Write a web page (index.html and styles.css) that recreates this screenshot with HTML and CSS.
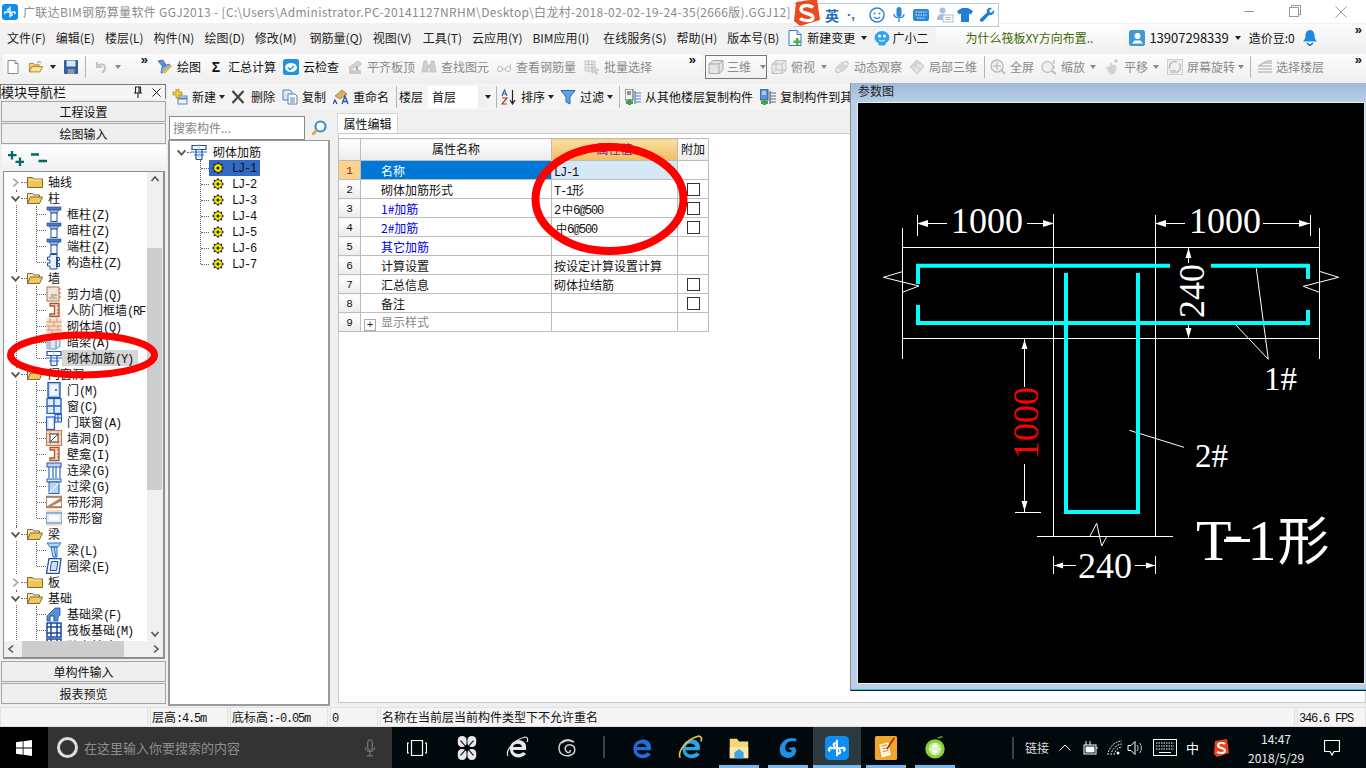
FILE: index.html
```html
<!DOCTYPE html>
<html lang="zh-CN">
<head>
<meta charset="utf-8">
<title>广联达BIM钢筋算量软件</title>
<link rel="stylesheet" href="styles.css">
</head>
<body>
<svg class="defs" aria-hidden="true">
  <symbol id="logo" viewBox="0 0 16 16"><rect width="16" height="16" rx="3" fill="#0b8df2"/><path d="M8 2.500v11M2.800 8.200h10.400M8 5.500c-2-2-3.300.8-1.200 1.900M8 11c2 1.800 3.200-.8 1.200-1.800M5 8.200C3 6.500 1.500 9.500 3.500 10M11 8.200c2-1.700 3 1.300 1.300 1.800" fill="none" stroke="#fff" stroke-width="1.300"/></symbol>
  <symbol id="new" viewBox="0 0 16 16"><path d="M3 1.500h7l3 3v10H3z" fill="#fff" stroke="#7d8c9c"/><path d="M10 1.500v3h3" fill="#dfe7ef" stroke="#7d8c9c"/></symbol>
  <symbol id="open" viewBox="0 0 18 16"><path d="M1.500 13.500V4h5l1 1.500h5V8" fill="#f3cf73" stroke="#a97e26"/><path d="M1.500 13.500L4.500 7.500H16.500L13.500 13.500z" fill="#fbe29a" stroke="#a97e26"/><path d="M10 3.500c1.500-2 3.500-2 5 0" fill="none" stroke="#4477b0"/></symbol>
  <symbol id="save" viewBox="0 0 16 16"><rect x="1" y="1" width="14" height="14" rx="1" fill="#2f5da8"/><rect x="3.500" y="1.500" width="9" height="6" fill="#d9e4f2"/><rect x="4.500" y="10" width="7" height="5" fill="#8c97a6"/></symbol>
  <symbol id="undo" viewBox="0 0 16 16"><path d="M4 3v5h5M4.500 7.500C7 4 12 5 12 9c0 2-1 3.500-3 4.500" fill="none" stroke="#c4c4c4" stroke-width="2"/></symbol>
  <symbol id="draw" viewBox="0 0 16 16"><path d="M1 2l5-1 3 5-3 2z" fill="#5d93d6" stroke="#2d5c9e" stroke-width=".7"/><path d="M5 8l7-3 2 2-6 6-4 1z" fill="#84aee0" stroke="#2d5c9e" stroke-width=".7"/><path d="M5 13l9-7 1 1.500-7 7z" fill="#e8b93c"/></symbol>
  <symbol id="cloud" viewBox="0 0 16 16"><rect width="16" height="16" rx="2.500" fill="#1d93e2"/><ellipse cx="8" cy="8.500" rx="6" ry="4.500" fill="#fff"/><path d="M5 8.500l2 2 4-3.500" fill="none" stroke="#1d93e2" stroke-width="1.300"/></symbol>
  <symbol id="align" viewBox="0 0 16 16"><path d="M2 8l9-6 3 2v2L3 11z" fill="#d3d3d3" stroke="#b5b5b5" stroke-width=".6"/><rect x="2" y="11" width="12" height="4" fill="#c9c9c9"/><rect x="9" y="7" width="2" height="4" fill="#aaa"/></symbol>
  <symbol id="bino" viewBox="0 0 16 16"><path d="M3 2h3v4h4V2h3l2 11H9V8H7v5H1z" fill="#cfcfcf" stroke="#b2b2b2" stroke-width=".6"/></symbol>
  <symbol id="glass" viewBox="0 0 16 16"><circle cx="4" cy="10" r="2.600" fill="none" stroke="#bdbdbd"/><circle cx="12" cy="10" r="2.600" fill="none" stroke="#bdbdbd"/><path d="M6.500 10h3M14.500 9V5" stroke="#bdbdbd" fill="none"/></symbol>
  <symbol id="batch" viewBox="0 0 16 16"><path d="M1 2h10v10H1zM1 5.500h10M1 9h10M4.500 2v10M8 2v10" fill="#efefef" stroke="#bcbcbc" stroke-width=".8"/><path d="M8 7l7 4-3 1 2 3-2 .5-2-3-2 2z" fill="#d6d6d6" stroke="#b5b5b5" stroke-width=".5"/></symbol>
  <symbol id="cube" viewBox="0 0 16 16"><path d="M1 5l4-3.500h10V11l-4 3.500H1zM1 5h10v9.500M11 5l4-3.500" fill="#e4e4e4" stroke="#a9a9a9"/></symbol>
  <symbol id="cube2" viewBox="0 0 16 16"><path d="M1 5l4-3.500h10V11l-4 3.500H1zM1 5h10v9.500M11 5l4-3.500M1 14.500L5 11h10M5 1.500V11" fill="#ececec" stroke="#b5b5b5" stroke-width=".8"/></symbol>
  <symbol id="orbit" viewBox="0 0 16 16"><ellipse cx="8" cy="8" rx="7.500" ry="3.200" transform="rotate(-40 8 8)" fill="none" stroke="#cbcbcb" stroke-width="1.500"/><circle cx="8" cy="8" r="4.200" fill="#d7d7d7"/></symbol>
  <symbol id="local" viewBox="0 0 16 16"><path d="M1 8l7-7 7 6-7 8z" fill="#e3e3e3" stroke="#c0c0c0"/><path d="M4.500 4.500l7 6.500M8 1l-3.500 11M1 8l11-5" stroke="#c4c4c4" fill="none" stroke-width=".8"/></symbol>
  <symbol id="full" viewBox="0 0 16 16"><circle cx="7" cy="7" r="6" fill="#f0f0f0" stroke="#b8b8b8" stroke-width="1.300"/><path d="M7 3v8M3 7h8" stroke="#b0b0b0"/><path d="M11 11l4 4" stroke="#bbb" stroke-width="2"/></symbol>
  <symbol id="zoomi" viewBox="0 0 16 16"><circle cx="6.500" cy="8" r="5.500" fill="#eee" stroke="#c5c5c5" stroke-width="1.400"/><path d="M11 12l4 3" stroke="#bbb" stroke-width="2"/><path d="M13 1v4M13 7v3" stroke="#c6c6c6" stroke-width="1.600"/></symbol>
  <symbol id="pan" viewBox="0 0 16 16"><path d="M2 9l3-2 1 1V4l2-.5.500 3 1.500-1 1.500 1 1 1-.5 5-3 3H6z" fill="#d2d2d2"/><path d="M12 0v4M10 2h4" stroke="#bdbdbd"/></symbol>
  <symbol id="rot" viewBox="0 0 16 16"><rect x=".5" y=".5" width="15" height="15" fill="#efefef" stroke="#cfcfcf"/><circle cx="8" cy="8" r="5.500" fill="none" stroke="#bababa" stroke-width="1.400" stroke-dasharray="12 3"/><path d="M3 11h6v3H3z" fill="#ccc"/></symbol>
  <symbol id="layers" viewBox="0 0 16 16"><path d="M1 7l6-3h8M1 7h14M1 10h14M1 13h14M4 5l6-3h5" fill="none" stroke="#bfbfbf" stroke-width="1.300"/></symbol>
  <symbol id="newc" viewBox="0 0 16 16"><rect x="6" y="7" width="9" height="8" fill="#eef3fb" stroke="#5b81b8"/><path d="M6 9.500h9" stroke="#5b81b8" stroke-width="2"/><path d="M4 0h3v3h3v3H7v3H4V6H1V3h3z" fill="#f4c93c" stroke="#a78420" stroke-width=".7"/></symbol>
  <symbol id="xx" viewBox="0 0 16 16"><path d="M2.500 2l11 12M13.500 2l-11 12" stroke="#444" stroke-width="2.200" fill="none"/></symbol>
  <symbol id="copy" viewBox="0 0 16 16"><path d="M1 1h7l2 2v8H1z" fill="#dbe6f5" stroke="#5b7fae"/><path d="M6 5h7l2 2v8H6z" fill="#fff" stroke="#5b7fae"/><path d="M8 9h5M8 11h5M8 13h5" stroke="#5b7fae"/></symbol>
  <symbol id="rename" viewBox="0 0 16 16"><path d="M2 7l7-6 5 4-7 5z" fill="#d7b35a" stroke="#8b7032" stroke-width=".7"/><path d="M0 15l2-4 2 4M9 15l3-8 3 8M10 12.500h4" fill="none" stroke="#2b56a5" stroke-width="1.400"/></symbol>
  <symbol id="sort" viewBox="0 0 16 16"><path d="M1 7l2.500-6L6 7M2 5h3" fill="none" stroke="#3460b0" stroke-width="1.200"/><path d="M1 9h5L1 15h5" fill="none" stroke="#a0402a" stroke-width="1.200"/><path d="M11.500 1v13M9 11l2.500 4 2.500-4" fill="none" stroke="#222" stroke-width="1.200"/></symbol>
  <symbol id="filter" viewBox="0 0 16 16"><path d="M1 1.500h14L10 8v7l-4-2V8z" fill="#5ea2e2" stroke="#2d6cb0"/></symbol>
  <symbol id="cfrom" viewBox="0 0 16 16"><rect x="0" y="0" width="8" height="11" fill="#f2f2f2" stroke="#555"/><path d="M2 3h4M2 5h4" stroke="#333"/><path d="M10 4h6M10 7h6M10 10h6M10 13h6M10 2v13" stroke="#4c7fc0" stroke-width="1.200"/><path d="M3 10h3v2h2v3H6v1H3v-1H1v-3h2z" fill="#3fa34d"/></symbol>
  <symbol id="cto" viewBox="0 0 16 16"><rect x="0" y="0" width="8" height="11" fill="#5c8fd8" stroke="#2c5aa0"/><path d="M2 3h4M2 5h4" stroke="#fff"/><path d="M10 4h6M10 7h6M10 10h6M10 13h6M10 2v13" stroke="#666" stroke-width="1.200"/><path d="M3 10h3v2h2v3H6v1H3v-1H1v-3h2z" fill="#3fa34d"/></symbol>
  <symbol id="change" viewBox="0 0 16 16"><path d="M2 .5h8l4 4v11H2z" fill="#fff" stroke="#2f7cc4"/><path d="M10 .5v4h4" fill="#cfe4f7" stroke="#2f7cc4"/><path d="M9 8h2.500v2.500H14V13h-2.500v2.500H9V13H6.500v-2.500H9z" fill="#4fae3f"/></symbol>
  <symbol id="bot" viewBox="0 0 16 16"><ellipse cx="8" cy="7.500" rx="7.500" ry="6.500" fill="#2fa4ea"/><circle cx="5.500" cy="6" r="1.600" fill="#fff"/><circle cx="10.500" cy="6" r="1.600" fill="#fff"/><path d="M5 10c2 1.500 4 1.500 6 0" fill="none" stroke="#fff"/><path d="M4 13l1 2.500h6l1-2.500" fill="#2fa4ea"/></symbol>
  <symbol id="user" viewBox="0 0 16 16"><rect width="16" height="16" rx="2.500" fill="#3c9ad6"/><circle cx="8.500" cy="6" r="3" fill="#fff"/><path d="M3 13.500l2.500-3h6l2.500 3z" fill="#fff"/></symbol>
  <symbol id="bell" viewBox="0 0 16 16"><path d="M8 0c-3 0-4.500 3-4.500 5.500 0 3-1 4.500-2.500 6h14c-1.500-1.500-2.500-3-2.500-6C12.500 3 11 0 8 0z" fill="#1a8be5"/><path d="M5 13l3 2.500 3-2.500" fill="none" stroke="#1a6fc0" stroke-width="1.500"/></symbol>
  <symbol id="find" viewBox="0 0 16 16"><circle cx="9.500" cy="6.500" r="5" fill="#fff" stroke="#2d8fdd" stroke-width="2.200"/><path d="M6 10l-4.500 4.500" stroke="#e0a63a" stroke-width="2.600"/></symbol>
  <symbol id="plus" viewBox="0 0 16 15"><path d="M4 0v8.500M0 4.200h8.500M12 6.500v8.500M7.500 10.800H16" stroke="#006a63" stroke-width="2.300" fill="none"/></symbol>
  <symbol id="minus" viewBox="0 0 16 15"><path d="M0 3.500h8M7.500 10H16" stroke="#006a63" stroke-width="2.300" fill="none"/></symbol>
  <symbol id="chd" viewBox="0 0 10 10"><path d="M1.500 3l3.500 4 3.500-4" fill="none" stroke="#555" stroke-width="1.600"/></symbol>
  <symbol id="chr" viewBox="0 0 10 10"><path d="M3 1.500l4 3.500-4 3.500" fill="none" stroke="#aaa" stroke-width="1.600"/></symbol>
  <symbol id="chu" viewBox="0 0 10 10"><path d="M1.500 7l3.500-4 3.500 4" fill="none" stroke="#555" stroke-width="1.600"/></symbol>
  <symbol id="chl" viewBox="0 0 10 10"><path d="M7 1.500L3 5l4 3.500" fill="none" stroke="#555" stroke-width="1.600"/></symbol>
  <symbol id="chr2" viewBox="0 0 10 10"><path d="M3 1.500l4 3.500-4 3.500" fill="none" stroke="#555" stroke-width="1.600"/></symbol>
  <symbol id="fc" viewBox="0 0 16 16"><path d="M.5 13.500V3.500h5l1.500 1.500h8.500v8.500z" fill="#f1c552" stroke="#7c6a3a"/><path d="M1.500 6h13" stroke="#fbe9ac"/></symbol>
  <symbol id="fo" viewBox="0 0 16 16"><path d="M.5 13.500V3.500h5l1.500 1.500h5.500V7" fill="#f6e7b8" stroke="#7c6a3a"/><path d="M.5 13.500L3.500 7h12l-3 6.500z" fill="#f4c95a" stroke="#7c6a3a"/></symbol>
  <symbol id="col" viewBox="0 0 16 16"><rect x="1" y="1" width="14" height="3" fill="#4a7cc4" stroke="#234f9a" stroke-width=".7"/><path d="M3 4h10l-2 3H5z" fill="#9dbde6" stroke="#234f9a" stroke-width=".7"/><rect x="5" y="7" width="6" height="8.500" fill="#fff" stroke="#1f4fa0"/></symbol>
  <symbol id="ccol" viewBox="0 0 16 16"><path d="M4 .5h7v3h2.500v3H11v3h2.500v3H11v2.500H4V12H1.500V9H4V6H1.500V3H4z" fill="#e9f0fb" stroke="#1f4fa0"/><path d="M11 3v10" stroke="#1f4fa0" stroke-width="2"/></symbol>
  <symbol id="swall" viewBox="0 0 16 16"><rect x="1" y="1" width="12" height="14" fill="#f4e5d9" stroke="#b3714a"/><path d="M14 2v2M14 6v2M14 10v2M3 12h8M5 9h6" stroke="#b3714a"/><path d="M3 13l3-4 5 3z" fill="#bbb"/></symbol>
  <symbol id="fwall" viewBox="0 0 16 16"><path d="M4 1.500h9v13H4v-2.500h4.500v-8H4z" fill="#f4dcc8" stroke="#a6552a" stroke-width="1.300"/><path d="M11 4h2M11 8h2M11 11h2" stroke="#a6552a"/></symbol>
  <symbol id="brick" viewBox="0 0 16 16"><rect x=".5" y=".5" width="15" height="15" fill="#f7dccb"/><path d="M0 4h16M0 8h16M0 12h16M4 0v4M11 0v4M8 4v4M3 8v4M12 8v4M6 12v4" stroke="#d8905e" stroke-width=".9"/></symbol>
  <symbol id="hbeam" viewBox="0 0 16 16"><path d="M1 4l4-3h9v11l-4 3H1z" fill="#dce8f5" stroke="#7090b8"/><path d="M1 4h9v11M10 4l4-3" fill="none" stroke="#7090b8"/><rect x="1" y="4" width="4" height="11" fill="#a9c2e0"/></symbol>
  <symbol id="rein" viewBox="0 0 16 16"><path d="M1 1.500h14v4H1zM5 5.500v10M11 5.500v10M5 15.500h6" fill="none" stroke="#1f4fa8" stroke-width="1.200"/><path d="M0 8h16M3 11h10" stroke="#2b6bd0" stroke-width="1.200"/><path d="M8 0v14" stroke="#9cb6e0"/></symbol>
  <symbol id="door" viewBox="0 0 16 16"><rect x="2" y=".5" width="12" height="15" fill="#bcd5f5" stroke="#1f4fa8" stroke-width="1.300"/><rect x="4" y="2.500" width="8" height="11" fill="#eef5fd"/><circle cx="10" cy="8" r="1" fill="#1f4fa8"/></symbol>
  <symbol id="win" viewBox="0 0 16 16"><rect x="1" y=".5" width="14" height="15" fill="#dfeafa" stroke="#1f5fb8" stroke-width="1.300"/><path d="M8 0v16M1 8h14" stroke="#1f5fb8" stroke-width="1.300"/></symbol>
  <symbol id="dw" viewBox="0 0 16 16"><rect x=".5" y="3" width="8" height="12.500" fill="#dfeafa" stroke="#1f5fb8" stroke-width="1.200"/><rect x="3" y="5" width="3.500" height="9" fill="#fff"/><path d="M9 .5h6.500V8H9zM12 .5V8M9 4h6.500" fill="#dfeafa" stroke="#1f5fb8" stroke-width="1.100"/></symbol>
  <symbol id="hole" viewBox="0 0 16 16"><rect x=".5" y=".5" width="15" height="15" fill="#f7dccb" stroke="#c07a4a"/><path d="M0 4h16M0 12h16M4 0v16M12 0v16" stroke="#d8905e" stroke-width=".8"/><rect x="4" y="4" width="8" height="8" fill="#fff" stroke="#444"/><path d="M4 12l8-8" stroke="#444"/></symbol>
  <symbol id="lintel" viewBox="0 0 16 16"><path d="M1 1h14v4H1zM3 5v11M7 5v11M10 5v11M14 5v11" fill="#bcd2f0" stroke="#1f5fb8" stroke-width="1.100"/></symbol>
  <symbol id="gl" viewBox="0 0 16 16"><rect x="1" y="1" width="14" height="3" fill="#dfeafa" stroke="#1f5fb8"/><rect x="3" y="4" width="10" height="11.500" fill="#bcd5f5" stroke="#1f5fb8"/><path d="M3 15l10-10" stroke="#fff"/></symbol>
  <symbol id="bh" viewBox="0 0 16 16"><rect y="1" width="16" height="14" fill="#f7dccb"/><rect y="3" width="16" height="10" fill="#fff" stroke="#7a4a20" stroke-width="1.200"/><path d="M0 13L16 3v4L4 13z" fill="#b98050"/></symbol>
  <symbol id="bw" viewBox="0 0 16 16"><rect y="0" width="16" height="16" fill="#f7dccb"/><rect y="3" width="16" height="10" fill="#dfeafa" stroke="#5f8fd0" stroke-width="1.200"/><rect x="3" y="5.500" width="10" height="5" fill="#fff"/></symbol>
  <symbol id="beam" viewBox="0 0 16 16"><path d="M1 1h14l-3 4H4zM5 5h6v10H7z" fill="#bcd5f5" stroke="#2b77c8"/><path d="M8 5l2 10" stroke="#2b77c8"/></symbol>
  <symbol id="rbeam" viewBox="0 0 16 16"><path d="M3 .5h12L13 15.500H.5z" fill="#fff" stroke="#1f4fa8" stroke-width="1.300"/><path d="M5.500 3.500h6.500L10.500 12.500H4z" fill="#cfe0f6" stroke="#1f4fa8"/></symbol>
  <symbol id="fbeam" viewBox="0 0 16 16"><path d="M1 15V10L9 2h5v7l-2 2v4z" fill="#5b8fd0" stroke="#1f4fa8" stroke-width=".8"/><path d="M4 15v-5h4v5" fill="#fff" stroke="#1f4fa8"/></symbol>
  <symbol id="raft" viewBox="0 0 16 16"><rect x="1" y="1" width="14" height="14" fill="#fff" stroke="#17479c" stroke-width="1.500"/><path d="M1 5h14M1 11h14M5 1v14M11 1v14" stroke="#17479c" stroke-width="1.500"/></symbol>
  <symbol id="gear" viewBox="0 0 12 12"><circle cx="6" cy="6" r="4.300" fill="#f4e700" stroke="#222" stroke-width=".9"/><circle cx="6" cy="6" r="1.600" fill="#222"/><path d="M6 0v2M6 10v2M0 6h2M10 6h2M1.800 1.800l1.400 1.400M8.800 8.800l1.400 1.400M1.800 10.200l1.400-1.400M8.800 3.200l1.400-1.400" stroke="#222" stroke-width="1.100"/></symbol>
  <symbol id="wstart" viewBox="0 0 16 16"><path d="M0 2.300L6.700 1.300V7.500H0zM7.500 1.200L16 0V7.500H7.500zM0 8.500H6.700V14.700L0 13.700zM7.500 8.500H16V16L7.500 14.800z" fill="#fff"/></symbol>
  <symbol id="mic" viewBox="0 0 16 24"><rect x="5" y="1" width="6" height="14" rx="3" fill="none" stroke="#888" stroke-width="1.300"/><path d="M2 11c0 8 12 8 12 0M8 18v4M4 22.500h8" fill="none" stroke="#888" stroke-width="1.300"/></symbol>
  <symbol id="tview" viewBox="0 0 20 16"><rect x="4.500" y=".5" width="11" height="15" fill="none" stroke="#fff" stroke-width="1.200"/><path d="M2 3H.5v10H2M18 3h1.500v10H18" fill="none" stroke="#fff" stroke-width="1.200"/></symbol>
  <symbol id="fan" viewBox="0 0 22 26"><rect x="1" y="0" width="9.500" height="12" rx="4.500" fill="#e8e8e8"/><rect x="11.500" y="0" width="9.500" height="12" rx="4.500" fill="#e8e8e8"/><rect x="1" y="14" width="9.500" height="12" rx="4.500" fill="#e8e8e8"/><rect x="11.500" y="14" width="9.500" height="12" rx="4.500" fill="#e8e8e8"/><path d="M4 5l7 8 7-8M4 21l7-8 7 8" fill="none" stroke="#02090d" stroke-width="1.200"/></symbol>
  <symbol id="ie" viewBox="0 0 24 24"><path d="M21 14H8c.5 4 7 5.500 10 2l3 2c-5 6-16 4-16-5C5 5 14 2 19 6c2 2 2.500 4 2 8zM8 11h9c-.5-4-8-4.500-9 0z" fill="#1e6fdc"/></symbol>
  <symbol id="iew" viewBox="0 0 24 24"><path d="M21 14H8c.5 4 7 5.500 10 2l3 2c-5 6-16 4-16-5C5 5 14 2 19 6c2 2 2.500 4 2 8zM8 11h9c-.5-4-8-4.500-9 0z" fill="#e8e8e8"/><path d="M3 20C0 15 9 4 20 1c3 0 3 3 2 5" fill="none" stroke="#e8e8e8" stroke-width="1.200"/></symbol>
  <symbol id="iec" viewBox="0 0 24 24"><path d="M21 14H8c.5 4 7 5.500 10 2l3 2c-5 6-16 4-16-5C5 5 14 2 19 6c2 2 2.500 4 2 8zM8 11h9c-.5-4-8-4.500-9 0z" fill="#29a6e8"/><path d="M3 21C0 15 9 4 20 1c3 0 3 3 2 5" fill="none" stroke="#e8c23a" stroke-width="1.500"/></symbol>
  <symbol id="spiral" viewBox="0 0 22 22"><path d="M18 5C12 0 3 4 3 11s7 9 12 7 5-9 0-10-7 3-5 6 5 1 4-1M6 6c3-3 8-3 12-1" fill="none" stroke="#d0d0d0" stroke-width="1.500"/></symbol>
  <symbol id="gblue" viewBox="0 0 22 26"><path d="M20 3C12 0 2 5 2 15c0 8 8 10 13 8s6-8 3-11l-7 1 4 3c-1 3-7 2-7-3 0-6 6-9 12-7z" fill="#1d8fe6"/></symbol>
  <symbol id="explorer" viewBox="0 0 22 26"><path d="M1 3h8l2 3h10v18H1z" fill="#f4d777"/><path d="M1 12h20v12H1z" fill="#f9e8a8"/><path d="M6 18l5-4 5 4v6H6z" fill="#3aa6e6"/></symbol>
  <symbol id="note" viewBox="0 0 24 26"><rect width="24" height="26" rx="2" fill="#f4a62a"/><path d="M4 9l11-3 3 15-11 3z" fill="#fff4d4" stroke="#c77a10" stroke-width=".6"/><path d="M7 11l6-1.500M8 14l6-1.500M8.500 17l6-1.500" stroke="#b58030"/><path d="M21 2L13 14" stroke="#a04010" stroke-width="2"/></symbol>
  <symbol id="ball" viewBox="0 0 22 26"><circle cx="11" cy="14" r="10.500" fill="#8ccf3c"/><circle cx="11" cy="14" r="7" fill="#c9ec94"/><path d="M5 14h12M11 8l-3 4h6zM11 20l-3-4h6z" fill="#fff" stroke="#fff"/><path d="M14 2l5-1" stroke="#4a9a20" stroke-width="2"/></symbol>
  <symbol id="bat" viewBox="0 0 18 14"><rect x="3" y="4" width="12" height="9" fill="none" stroke="#fff"/><rect x="4.500" y="5.500" width="9" height="6" fill="#fff"/><path d="M5 0v4M9 0v4M15 7h2" stroke="#fff"/></symbol>
  <symbol id="wifi" viewBox="0 0 16 16"><path d="M1 15C1 8 8 1 15 1M4 15c0-5 6-11 11-11M7 15c0-3 4-8 8-8" fill="none" stroke="#ddd" stroke-dasharray="2 1"/><circle cx="11" cy="13" r="1.500" fill="#fff"/></symbol>
  <symbol id="vol" viewBox="0 0 16 16"><path d="M1 5.500h3l4-4v13l-4-4H1z" fill="none" stroke="#fff"/><path d="M10 5c1.500 2 1.500 4 0 6M12.500 3c2.500 3 2.500 7 0 10" fill="none" stroke="#ccc"/></symbol>
  <symbol id="kbd" viewBox="0 0 24 17"><rect x=".5" y=".5" width="23" height="16" fill="none" stroke="#fff"/><path d="M3 4h18M3 7h18M3 10h18" stroke="#fff" stroke-dasharray="1.500 1"/><path d="M6 13.500h12" stroke="#fff"/></symbol>
  <symbol id="sred" viewBox="0 0 16 18"><path d="M2 2l12-2 2 14-12 4-3-3z" fill="#e8431a"/><path d="M12 5C10 3.500 5 3.500 5 6.500s7 2 7 5-5 3-8 1.500" fill="none" stroke="#fff" stroke-width="2"/></symbol>
  <symbol id="action" viewBox="0 0 16 16"><path d="M.5.500h15v11H10L8 15l-2-3.500H.5z" fill="none" stroke="#fff" stroke-width="1.200"/></symbol>
  <symbol id="smile" viewBox="0 0 16 16"><circle cx="8" cy="8" r="7" fill="none" stroke="#2a86d8" stroke-width="1.500"/><circle cx="5.500" cy="6.500" r="1" fill="#2a86d8"/><circle cx="10.500" cy="6.500" r="1" fill="#2a86d8"/><path d="M5 10c2 2 4 2 6 0" fill="none" stroke="#2a86d8" stroke-width="1.200"/></symbol>
  <symbol id="imic" viewBox="0 0 12 16"><rect x="3.500" y="0" width="5" height="10" rx="2.500" fill="#2a86d8"/><path d="M1 7c0 5 10 5 10 0M6 12v3" fill="none" stroke="#2a86d8" stroke-width="1.300"/></symbol>
  <symbol id="ikbd" viewBox="0 0 16 12"><rect width="16" height="12" rx="2" fill="#2a86d8"/><path d="M2.500 3h11M2.500 6h11M4 9h8" stroke="#fff" stroke-dasharray="1.500 1"/></symbol>
  <symbol id="iperson" viewBox="0 0 16 16"><circle cx="5.500" cy="3.500" r="3" fill="#a8bfd8"/><path d="M0 13c0-4 2-6 5.500-6S8 8 8 8v5z" fill="#a8bfd8"/><rect x="6" y="8" width="10" height="7" fill="#fff" stroke="#a8bfd8"/><path d="M8 10.500h6M8 12.500h6" stroke="#a8bfd8"/></symbol>
  <symbol id="ishirt" viewBox="0 0 16 16"><path d="M5 1h6l5 3-2 3.500-2-1V15H4V6.500l-2 1L0 4z" fill="#1f7fd4"/></symbol>
  <symbol id="iwrench" viewBox="0 0 16 16"><path d="M15 3l-3 3-2-2 3-3c-3-1-6 1-5 4.500L1 12c-1 2 1 3.500 3 2.500L10 8c3 1 6-2 5-5z" fill="#1f7fd4"/></symbol>
  <symbol id="sbig" viewBox="0 0 27 27"><path d="M3 3l21-3 3 21-20 6-6-5z" fill="#ea4a1c"/><path d="M20 8.500C17 5.500 8 5.500 8 10.500s12 3 12 8c0 4-9 4-13 1" fill="none" stroke="#fff" stroke-width="3.400"/></symbol>
</svg>

<header class="titlebar">
  <svg class="ic logo"><use href="#logo"/></svg>
  <span class="titletext">广联达BIM钢筋算量软件 GGJ2013 - [C:\Users\Administrator.PC-20141127NRHM\Desktop\白龙村-2018-02-02-19-24-35(2666版).GGJ12]</span>
  <div class="winctl">
    <span class="min"></span><span class="max"></span>
    <svg class="cl" viewBox="0 0 12 12"><path d="M.5.500l11 11M11.500.500l-11 11" stroke="#999" fill="none"/></svg>
  </div>
</header>

<nav class="menubar">
  <div class="menus">
    <span>文件(F)</span><span>编辑(E)</span><span>楼层(L)</span><span>构件(N)</span><span>绘图(D)</span><span>修改(M)</span><span class="ml3">钢筋量(Q)</span><span>视图(V)</span><span class="ml1">工具(T)</span><span>云应用(Y)</span><span>BIM应用(I)</span><span class="ml4">在线服务(S)</span><span>帮助(H)</span><span>版本号(B)</span>
  </div>
  <div class="item ml8 g4"><svg class="ic"><use href="#change"/></svg><span>新建变更</span></div><i class="arrow dark ml6"></i>
  <div class="item ml7 g2"><svg class="ic"><use href="#bot"/></svg><span>广小二</span></div>
  <div class="news"><span>为什么筏板XY方向布置..</span></div>
  <div class="acct">
    <svg class="ic"><use href="#user"/></svg><span class="phone">13907298339</span><i class="arrow dark ml6"></i><span class="ml8">造价豆:0</span><svg class="ic ml7"><use href="#bell"/></svg><b class="more">»</b>
  </div>
</nav>

<div class="toolbar">
  <div class="tgroup ga">
    <svg class="ic ml2"><use href="#new"/></svg>
    <svg class="ic ml7"><use href="#open"/></svg><i class="arrow dark ml6"></i>
    <svg class="ic ml7"><use href="#save"/></svg>
    <i class="sep ml6"></i>
    <svg class="ic ml7"><use href="#undo"/></svg><i class="arrow ml6"></i>
    <b class="more m7">»</b>
  </div>
  <div class="tgroup gb">
    <div class="item"><svg class="ic"><use href="#draw"/></svg><span>绘图</span></div>
    <div class="item ml7"><span class="sigma">Σ</span><span>汇总计算</span></div>
    <div class="item ml7"><svg class="ic"><use href="#cloud"/></svg><span>云检查</span></div>
    <div class="item off ml8"><svg class="ic"><use href="#align"/></svg><span>平齐板顶</span></div>
    <div class="item off ml6"><svg class="ic"><use href="#bino"/></svg><span>查找图元</span></div>
    <div class="item off ml7"><svg class="ic"><use href="#glass"/></svg><span>查看钢筋量</span></div>
    <div class="item off ml8"><svg class="ic"><use href="#batch"/></svg><span>批量选择</span></div>
    <b class="more m7">»</b>
  </div>
  <div class="tgroup gc off">
    <div class="view3d"><svg class="ic"><use href="#cube"/></svg><span>三维</span><i class="arrow"></i></div>
    <div class="item ml4"><svg class="ic"><use href="#cube2"/></svg><span>俯视</span></div><i class="arrow ml6"></i>
    <div class="item ml7"><svg class="ic"><use href="#orbit"/></svg><span>动态观察</span></div>
    <div class="item ml7"><svg class="ic"><use href="#local"/></svg><span>局部三维</span></div>
    <i class="sep ml7"></i>
    <div class="item ml5"><svg class="ic"><use href="#full"/></svg><span>全屏</span></div>
    <div class="item ml7"><svg class="ic"><use href="#zoomi"/></svg><span>缩放</span></div><i class="arrow ml5"></i>
    <div class="item ml8"><svg class="ic"><use href="#pan"/></svg><span>平移</span></div><i class="arrow ml5"></i>
    <div class="item ml8"><svg class="ic"><use href="#rot"/></svg><span>屏幕旋转</span></div><i class="arrow ml3"></i>
    <i class="sep ml6"></i>
    <div class="item ml6 g3"><svg class="ic"><use href="#layers"/></svg><span>选择楼层</span></div>
    <b class="more">»</b>
  </div>
</div>

<main class="main">
  <aside class="nav">
    <div class="navhead"><span>模块导航栏</span>
      <svg class="pin" viewBox="0 0 10 12"><path d="M2.500 1h5v6h-5zM1 7h8M5 7v5M6 1v6" fill="none" stroke="#222" stroke-width="1.100"/></svg>
      <svg class="navx" viewBox="0 0 9 9"><path d="M.5.500l8 8M8.500.500l-8 8" stroke="#222" fill="none"/></svg>
    </div>
    <div class="navbtn">工程设置</div>
    <div class="navbtn">绘图输入</div>
    <div class="expand"><svg class="pm"><use href="#plus"/></svg><svg class="pm"><use href="#minus"/></svg></div>
    <div class="treebox">
      <div class="treeview">
        <div class="tree">
          <div class="group"><div class="row"><svg class="chev"><use href="#chr"/></svg><i class="lead0"></i><svg class="ic"><use href="#fc"/></svg><span class="lbl">轴线</span></div></div>
          <div class="group open"><div class="row"><svg class="chev"><use href="#chd"/></svg><i class="lead0"></i><svg class="ic"><use href="#fo"/></svg><span class="lbl">柱</span></div>
            <div class="kids">
              <div class="row"><i class="lead"></i><svg class="ic"><use href="#col"/></svg><span class="lbl">框柱<span class="a">(Z)</span></span></div>
              <div class="row"><i class="lead"></i><svg class="ic"><use href="#col"/></svg><span class="lbl">暗柱<span class="a">(Z)</span></span></div>
              <div class="row"><i class="lead"></i><svg class="ic"><use href="#col"/></svg><span class="lbl">端柱<span class="a">(Z)</span></span></div>
              <div class="row"><i class="lead"></i><svg class="ic"><use href="#ccol"/></svg><span class="lbl">构造柱<span class="a">(Z)</span></span></div>
            </div>
          </div>
          <div class="group open"><div class="row"><svg class="chev"><use href="#chd"/></svg><i class="lead0"></i><svg class="ic"><use href="#fo"/></svg><span class="lbl">墙</span></div>
            <div class="kids">
              <div class="row"><i class="lead"></i><svg class="ic"><use href="#swall"/></svg><span class="lbl">剪力墙<span class="a">(Q)</span></span></div>
              <div class="row"><i class="lead"></i><svg class="ic"><use href="#fwall"/></svg><span class="lbl">人防门框墙<span class="a">(RF</span></span></div>
              <div class="row"><i class="lead"></i><svg class="ic"><use href="#brick"/></svg><span class="lbl">砌体墙<span class="a">(Q)</span></span></div>
              <div class="row"><i class="lead"></i><svg class="ic"><use href="#hbeam"/></svg><span class="lbl">暗梁<span class="a">(A)</span></span></div>
              <div class="row"><i class="lead"></i><svg class="ic"><use href="#rein"/></svg><span class="lbl hot">砌体加筋<span class="a">(Y)</span></span></div>
            </div>
          </div>
          <div class="group open"><div class="row"><svg class="chev"><use href="#chd"/></svg><i class="lead0"></i><svg class="ic"><use href="#fo"/></svg><span class="lbl">门窗洞</span></div>
            <div class="kids">
              <div class="row"><i class="lead"></i><svg class="ic"><use href="#door"/></svg><span class="lbl">门<span class="a">(M)</span></span></div>
              <div class="row"><i class="lead"></i><svg class="ic"><use href="#win"/></svg><span class="lbl">窗<span class="a">(C)</span></span></div>
              <div class="row"><i class="lead"></i><svg class="ic"><use href="#dw"/></svg><span class="lbl">门联窗<span class="a">(A)</span></span></div>
              <div class="row"><i class="lead"></i><svg class="ic"><use href="#hole"/></svg><span class="lbl">墙洞<span class="a">(D)</span></span></div>
              <div class="row"><i class="lead"></i><svg class="ic"><use href="#fwall"/></svg><span class="lbl">壁龛<span class="a">(I)</span></span></div>
              <div class="row"><i class="lead"></i><svg class="ic"><use href="#lintel"/></svg><span class="lbl">连梁<span class="a">(G)</span></span></div>
              <div class="row"><i class="lead"></i><svg class="ic"><use href="#gl"/></svg><span class="lbl">过梁<span class="a">(G)</span></span></div>
              <div class="row"><i class="lead"></i><svg class="ic"><use href="#bh"/></svg><span class="lbl">带形洞</span></div>
              <div class="row"><i class="lead"></i><svg class="ic"><use href="#bw"/></svg><span class="lbl">带形窗</span></div>
            </div>
          </div>
          <div class="group open"><div class="row"><svg class="chev"><use href="#chd"/></svg><i class="lead0"></i><svg class="ic"><use href="#fo"/></svg><span class="lbl">梁</span></div>
            <div class="kids">
              <div class="row"><i class="lead"></i><svg class="ic"><use href="#beam"/></svg><span class="lbl">梁<span class="a">(L)</span></span></div>
              <div class="row"><i class="lead"></i><svg class="ic"><use href="#rbeam"/></svg><span class="lbl">圈梁<span class="a">(E)</span></span></div>
            </div>
          </div>
          <div class="group"><div class="row"><svg class="chev"><use href="#chr"/></svg><i class="lead0"></i><svg class="ic"><use href="#fc"/></svg><span class="lbl">板</span></div></div>
          <div class="group open"><div class="row"><svg class="chev"><use href="#chd"/></svg><i class="lead0"></i><svg class="ic"><use href="#fo"/></svg><span class="lbl">基础</span></div>
            <div class="kids">
              <div class="row"><i class="lead"></i><svg class="ic"><use href="#fbeam"/></svg><span class="lbl">基础梁<span class="a">(F)</span></span></div>
              <div class="row"><i class="lead"></i><svg class="ic"><use href="#raft"/></svg><span class="lbl">筏板基础<span class="a">(M)</span></span></div>
              <div class="row"><i class="lead"></i><svg class="ic"><use href="#raft"/></svg><span class="lbl">独立基础<span class="a">(D)</span></span></div>
            </div>
          </div>
        </div>
        <div class="vscroll">
          <svg class="sbtn"><use href="#chu"/></svg>
          <div class="vtrack"><div class="vthumb"></div></div>
          <svg class="sbtn"><use href="#chd"/></svg>
        </div>
      </div>
      <div class="hscroll">
        <svg class="sbtn"><use href="#chl"/></svg>
        <div class="htrack"><div class="hthumb"></div></div>
        <svg class="sbtn"><use href="#chr2"/></svg>
      </div>
    </div>
    <div class="navbtn bt">单构件输入</div>
    <div class="navbtn">报表预览</div>
  </aside>

  <section class="work">
    <div class="ctoolbar">
      <div class="item"><svg class="ic"><use href="#newc"/></svg><span>新建</span></div><i class="arrow dark ml3"></i>
      <div class="item g5 ml5"><svg class="ic"><use href="#xx"/></svg><span>删除</span></div>
      <div class="item ml7"><svg class="ic"><use href="#copy"/></svg><span>复制</span></div>
      <div class="item ml7"><svg class="ic"><use href="#rename"/></svg><span>重命名</span></div>
      <i class="sep ml7"></i>
      <span class="ml2">楼层</span>
      <div class="combo ml5"><span>首层</span><i class="arrow dark"></i></div>
      <i class="sep ml6"></i>
      <div class="item ml4"><svg class="ic"><use href="#sort"/></svg><span>排序</span></div><i class="arrow dark ml3"></i>
      <div class="item ml6"><svg class="ic"><use href="#filter"/></svg><span>过滤</span></div><i class="arrow dark ml3"></i>
      <i class="sep ml6"></i>
      <div class="item ml5"><svg class="ic"><use href="#cfrom"/></svg><span>从其他楼层复制构件</span></div>
      <div class="item ml7"><svg class="ic"><use href="#cto"/></svg><span>复制构件到其</span></div>
    </div>
    <div class="workbody">
      <div class="complist">
        <div class="searchrow">
          <div class="searchbox">搜索构件...</div>
          <svg class="ic searchbtn"><use href="#find"/></svg>
        </div>
        <div class="comptree">
          <div class="row croot"><svg class="chev"><use href="#chd"/></svg><i class="lead1"></i><svg class="ic"><use href="#rein"/></svg><span class="lbl">砌体加筋</span></div>
          <div class="ckids">
            <div class="row"><i class="lead2"></i><div class="citem sel"><svg class="gear"><use href="#gear"/></svg><span class="a">LJ-1</span></div></div>
            <div class="row"><i class="lead2"></i><div class="citem"><svg class="gear"><use href="#gear"/></svg><span class="a">LJ-2</span></div></div>
            <div class="row"><i class="lead2"></i><div class="citem"><svg class="gear"><use href="#gear"/></svg><span class="a">LJ-3</span></div></div>
            <div class="row"><i class="lead2"></i><div class="citem"><svg class="gear"><use href="#gear"/></svg><span class="a">LJ-4</span></div></div>
            <div class="row"><i class="lead2"></i><div class="citem"><svg class="gear"><use href="#gear"/></svg><span class="a">LJ-5</span></div></div>
            <div class="row"><i class="lead2"></i><div class="citem"><svg class="gear"><use href="#gear"/></svg><span class="a">LJ-6</span></div></div>
            <div class="row"><i class="lead2"></i><div class="citem"><svg class="gear"><use href="#gear"/></svg><span class="a">LJ-7</span></div></div>
          </div>
        </div>
      </div>
      <div class="props">
        <div class="tabs"><div class="tab">属性编辑</div></div>
        <div class="tabpage">
          <table class="ptable">
            <colgroup><col class="c0"><col class="c1"><col class="c2"><col class="c3"></colgroup>
            <thead><tr><th class="rn"></th><th>属性名称</th><th class="hval">属性值</th><th>附加</th></tr></thead>
            <tbody>
              <tr><td class="rn cur">1</td><td class="nm sel">名称</td><td class="val selv"><span class="a">LJ-1</span></td><td></td></tr>
              <tr><td class="rn">2</td><td class="nm">砌体加筋形式</td><td class="val"><span class="a">T-1</span>形</td><td class="ck"><i class="box"></i></td></tr>
              <tr><td class="rn">3</td><td class="nm blue">1#加筋</td><td class="val"><span class="a">2</span><span class="fi">中</span><span class="a">6@500</span></td><td class="ck"><i class="box"></i></td></tr>
              <tr><td class="rn">4</td><td class="nm blue">2#加筋</td><td class="val"><span class="fi">中</span><span class="a">6@500</span></td><td class="ck"><i class="box"></i></td></tr>
              <tr><td class="rn">5</td><td class="nm blue">其它加筋</td><td class="val"></td><td></td></tr>
              <tr><td class="rn">6</td><td class="nm">计算设置</td><td class="val">按设定计算设置计算</td><td></td></tr>
              <tr><td class="rn">7</td><td class="nm">汇总信息</td><td class="val">砌体拉结筋</td><td class="ck"><i class="box"></i></td></tr>
              <tr><td class="rn">8</td><td class="nm">备注</td><td class="val"></td><td class="ck"><i class="box"></i></td></tr>
              <tr><td class="rn">9</td><td class="nm9"><i class="plusbox">+</i><span>显示样式</span></td><td class="val"></td><td></td></tr>
            </tbody>
          </table>
        </div>
      </div>
    </div>
  </section>
</main>

<footer class="status">
  <div class="seg s0"></div>
  <div class="seg s1">层高<span class="a">:4.5m</span></div>
  <div class="seg s2">底标高<span class="a">:-0.05m</span></div>
  <div class="seg s3"><span class="a">0</span></div>
  <div class="seg s4">名称在当前层当前构件类型下不允许重名</div>
  <div class="seg s5"><span class="a">346.6 FPS</span></div>
</footer>

<div class="taskbar">
  <div class="start"><svg class="ic"><use href="#wstart"/></svg></div>
  <div class="tsearch"><i class="cortana"></i><span>在这里输入你要搜索的内容</span><svg class="tmic"><use href="#mic"/></svg></div>
  <div class="tcell"><svg class="tv"><use href="#tview"/></svg></div>
  <div class="tcell"><svg class="t24"><use href="#fan"/></svg></div>
  <div class="tcell"><svg class="t24"><use href="#iew"/></svg></div>
  <div class="tcell"><svg class="t22"><use href="#spiral"/></svg></div>
  <i class="tsep"></i>
  <div class="tcell"><svg class="t26"><use href="#ie"/></svg></div>
  <div class="tcell w48"><svg class="t26"><use href="#iec"/></svg></div>
  <div class="tcell w49 run"><svg class="t24"><use href="#explorer"/></svg></div>
  <div class="tcell run"><svg class="t24"><use href="#gblue"/></svg></div>
  <div class="tcell w48 run active"><svg class="t24"><use href="#logo"/></svg></div>
  <div class="tcell run"><svg class="t24"><use href="#note"/></svg></div>
  <div class="tcell w48 run"><svg class="t24"><use href="#ball"/></svg></div>
  <div class="tray">
    <i class="tsep2"></i>
    <span class="link">链接</span>
    <svg class="up" viewBox="0 0 12 7"><path d="M.5 6.500L6 1l5.500 5.500" fill="none" stroke="#fff"/></svg>
    <svg class="tr-bat"><use href="#bat"/></svg>
    <svg class="tr-16"><use href="#wifi"/></svg>
    <svg class="tr-16 narrow"><use href="#vol"/></svg>
    <svg class="tr-kbd"><use href="#kbd"/></svg>
    <span class="ime">中</span>
    <svg class="tr-s"><use href="#sred"/></svg>
    <div class="clock"><span>14:47</span><span>2018/5/29</span></div>
    <svg class="tr-act"><use href="#action"/></svg>
  </div>
</div>

<!-- floating sogou input bar -->
<div class="imebar">
  <svg class="sbig"><use href="#sbig"/></svg>
  <b class="ying">英</b><b class="punc">·,</b>
  <svg class="ib16 m14"><use href="#smile"/></svg>
  <svg class="ib12 ml8"><use href="#imic"/></svg>
  <svg class="ib16 ml8"><use href="#ikbd"/></svg>
  <svg class="ib18 ml7"><use href="#iperson"/></svg>
  <svg class="ib16 ml3"><use href="#ishirt"/></svg>
  <svg class="ib16 ml6"><use href="#iwrench"/></svg>
</div>

<!-- floating parameter-diagram window -->
<div class="paramwin">
  <div class="paramtitle">参数图</div>
  <svg class="canvas" viewBox="858 103 506 580">
    <g fill="none" stroke="#fff" stroke-width="1" shape-rendering="crispEdges">
      <path d="M917.500 215v21M1053.500 214V536M1155.500 215V536M1310.500 215v21"/>
      <path d="M902.500 247.500h417M902.500 338.500h417M902.500 228v131M1319.500 228v131"/>
      <path d="M917 223.500h30M1027 223.500h27M1155 223.500h30M1263 223.500h47"/>
      <path d="M1188.500 247v16M1188.500 321v17"/>
      <path d="M1024.500 339v48M1024.500 464v48M1015 512.500h26"/>
      <path d="M1037 536.500h136M1053.500 556v18M1155.500 556v18M1054 565.500h22M1135 565.500h20"/>
    </g>
    <g fill="none" stroke="#fff" stroke-width="1">
      <path d="M902.300 271.700L883.300 277.300L919 286L902.300 292.300"/>
      <path d="M1319.300 271.300L1338.700 277.300L1303.300 286.300L1319.300 292.300"/>
      <path d="M1256.300 268.300L1268.300 359.300L1234 323"/>
      <path d="M1129.300 430.300L1184 447.300"/>
      <path d="M1090 536L1096.700 523.300L1101.700 546L1107 536"/>
    </g>
    <g fill="#fff">
      <path d="M917 223.500l11-3.500v7zM1054 223.500l-11-3.500v7zM1155 223.500l11-3.500v7zM1310 223.500l-11-3.500v7z"/>
      <path d="M1188.500 248l-3 10h6zM1188.500 338l-3-10h6z"/>
      <path d="M1024.500 340l-3 9h6zM1024.500 511l-3-10h6z"/>
      <path d="M1054 565.500l9-3v6zM1155 565.500l-9-3v6z"/>
    </g>
    <g fill="none" stroke="#0ff" stroke-width="4">
      <path d="M918 284V265.700H1170M1211 265.700H1308V279"/>
      <path d="M918 305V323H1308V310"/>
      <path d="M1066 273V512H1138V273"/>
    </g>
    <path d="M1224 540.500h26" stroke="#fff" stroke-width="3"/>
    <g class="cad">
      <text x="951" y="233">1000</text>
      <text x="1189" y="233">1000</text>
      <text transform="translate(1204 318) rotate(-90)">240</text>
      <text class="red" transform="translate(1038 459) rotate(-90)">1000</text>
      <text x="1078" y="578">240</text>
      <text class="mid" x="1264" y="390">1#</text>
      <text class="mid" x="1195" y="467">2#</text>
      <text class="big" x="1196" y="560">T<tspan dx="-2" dy="-8">-</tspan><tspan dx="4" dy="8">1</tspan><tspan class="xing" dx="1">形</tspan></text>
    </g>
  </svg>
</div>

<!-- hand-drawn red circles lying over the screenshot -->
<svg class="marks" viewBox="0 0 1366 768">
  <ellipse cx="609.500" cy="199" rx="74" ry="52" fill="none" stroke="#f00" stroke-width="8"/>
  <ellipse cx="82.500" cy="355" rx="72" ry="20" fill="none" stroke="#f00" stroke-width="7"/>
</svg>
</body>
</html>
```
FILE: styles.css
```css
* { box-sizing: border-box; }
html, body { margin: 0; padding: 0; }
body {
  position: relative;
  width: 1366px;
  height: 768px;
  overflow: hidden;
  display: flex;
  flex-direction: column;
  background: #f0f0f0;
  color: #111;
  font: 12px/16px "Noto Sans CJK SC", "Liberation Sans", sans-serif;
}
.defs { position: absolute; width: 0; height: 0; }
i { font-style: normal; display: block; flex: none; }
svg { display: block; flex: none; }
.ic { width: 16px; height: 16px; }

.ml1 { margin-left: 1px; } .ml2 { margin-left: 2px; } .ml3 { margin-left: 3px; }
.ml4 { margin-left: 4px; } .ml5 { margin-left: 5px; } .ml6 { margin-left: 6px; }
.ml7 { margin-left: 7px; } .ml8 { margin-left: 8px; } .ml9 { margin-left: 9px; }
.m14 { margin-left: 14px; }

/* title bar */
.titlebar { height: 23px; background: #fff; display: flex; align-items: center; padding-left: 2px; flex: none; }
.titletext { margin-left: 5px; color: #8b8b8b; white-space: nowrap; letter-spacing: .33px; }
.winctl { margin-left: auto; display: flex; align-items: center; }
.min { display: block; width: 10px; height: 1px; background: #999; margin-right: 35px; }
.max { display: block; width: 10px; height: 10px; border: 1px solid #999; margin-right: 36px; box-shadow: 2px -2px 0 -1px #fff, 2px -2px 0 0 #999; }
.cl { width: 12px; height: 12px; margin-right: 19px; }

/* menu */
.menubar { height: 30px; flex: none; display: flex; align-items: center; background: #f2f2f2; padding-left: 7px; }
.menus { display: flex; gap: 10px; color: #222; white-space: nowrap; }
.item { display: flex; align-items: center; gap: 4px; white-space: nowrap; flex: none; }
.g2 { gap: 2px; }
.g3 { gap: 3px; }
.g4 { gap: 4px; }
.g5 { gap: 5px; }
.news { width: 188px; height: 29px; margin-left: 8px; display: flex; align-items: center; padding-left: 29px; color: #3b6b00; background: linear-gradient(#fff, #f0f0f0); flex: none; }
.acct { flex: 1; height: 29px; background: linear-gradient(#fbfbfb, #eee); display: flex; align-items: center; padding-left: 5px; border-radius: 3px 0 0 3px; }
.phone { margin-left: 4px; font-size: 13px; color: #111; }
.more { margin-left: auto; align-self: flex-start; margin-right: 4px; font: bold 13px/12px "Liberation Sans", sans-serif; color: #111; }
.more.m7 { margin-right: 6px; }
.arrow { width: 0; height: 0; border: 3px solid transparent; border-top: 4px solid #888; border-bottom: 0; flex: none; }
.arrow.dark { border-top-color: #222; }

/* toolbar */
.toolbar { height: 30px; flex: none; display: flex; background: #f0f0f0; padding-top: 1px; }
.tgroup { display: flex; align-items: center; height: 29px; padding-bottom: 3px; background: linear-gradient(#fdfdfd, #eeeeee); border-radius: 3px; flex: none; }
.ga { width: 151px; margin-left: 3px; }
.gb { width: 548px; padding-left: 3px; }
.gc { flex: 1; margin-left: 1px; padding-left: 2px; }
.off, .off span { color: #8a8a8a; }
.off .more { color: #111; }
.sep { width: 1px; height: 22px; background: #b4b4b4; flex: none; }
.sigma { display: block; width: 16px; text-align: center; font: bold 14px/16px "Liberation Sans", sans-serif; color: #111; }
.view3d { width: 62px; height: 24px; border: 1px solid #777; display: flex; align-items: center; gap: 3px; padding-left: 2px; flex: none; white-space: nowrap; }
.view3d .arrow { margin-left: 6px; }

/* main */
.main { flex: none; height: 624px; display: flex; background: #f0f0f0; }
.nav { width: 166px; flex: none; display: flex; flex-direction: column; padding-top: 1px; }
.navhead { height: 15px; margin-bottom: 1px; border: 1px solid #777; border-bottom: 0; display: flex; align-items: center; font-size: 13px; background: #f5f5f5; flex: none; }
.navhead span { line-height: 14px; }
.pin { width: 10px; height: 12px; margin-left: auto; }
.navx { width: 9px; height: 9px; margin: 0 4px 0 9px; }
.navbtn { height: 21px; margin: 1px 0 0 1px; width: 165px; flex: none; background: #efefef; border: 1px solid #a4a4a4; text-align: center; line-height: 19px; font-size: 12px; }
.bt { margin-top: 2px; }
.expand { height: 26px; margin: 1px 0 0 2px; background: linear-gradient(#fff, #f0f0f0); display: flex; align-items: center; gap: 7px; padding-left: 6px; flex: none; }
.pm { width: 16px; height: 15px; }
.treebox { height: 488px; margin-left: 3px; width: 162px; border: 1px solid #8f8f8f; border-width: 1px 2px 2px 1px; background: #f0f0f0; flex: none; display: flex; flex-direction: column; }
.treeview { flex: 1; display: flex; min-height: 0; }
.tree { width: 143px; background: #fff; overflow: hidden; padding-top: 2px; flex: none; font-size: 12px; }
.row { height: 16px; display: flex; align-items: center; white-space: nowrap; position: relative; }
.group { margin-left: 12px; border-left: 1px dotted transparent; }
.group.open { border-left-color: #666; }
.chev { width: 11px; height: 11px; margin-left: -7px; background: #fff; }
.lead0 { width: 6px; border-top: 1px dotted #666; }
.lbl { margin-left: 5px; }
.kids { margin-left: 19px; border-left: 1px dotted #666; }
.kids .row:last-child::before { content: ""; position: absolute; left: -1px; top: 9px; bottom: 0; width: 1px; background: #fff; }
.lead { width: 9px; border-top: 1px dotted #666; }
.hot { background: #d6d6d6; padding-right: 5px; margin-left: 0; padding-left: 5px; }
.a { font: 12px/12px "Liberation Mono", monospace; letter-spacing: -1.200px; }
.fi { margin-left: 2px; font-size: 11px; line-height: 12px; }
.vscroll { flex: 1; display: flex; flex-direction: column; align-items: center; background: #f0f0f0; }
.sbtn { width: 14px; height: 14px; flex: none; padding: 2px; }
.vtrack { flex: 1; width: 100%; min-height: 0; padding-top: 62px; padding-bottom: 137px; }
.vthumb { height: 100%; background: #cdcdcd; width: 15px; }
.hscroll { height: 16px; display: flex; align-items: center; background: #f0f0f0; flex: none; }
.htrack { flex: 1; height: 100%; padding-left: 4px; padding-right: 24px; }
.hthumb { height: 100%; background: #cdcdcd; width: 102px; }

/* work area */
.work { flex: 1; min-width: 0; display: flex; flex-direction: column; margin-left: 2px; overflow: hidden; }
.ctoolbar { width: 682px; height: 26px; margin-top: 1px; flex: none; display: flex; align-items: center; padding-left: 4px; background: #f4f4f4; white-space: nowrap; overflow: hidden; }
.combo { width: 62px; height: 22px; flex: none; display: flex; align-items: center; padding-left: 4px; background: linear-gradient(90deg, #fff 50px, #f0f0f0 50px); }
.combo .arrow { margin-left: 29px; }
.workbody { flex: 1; display: flex; min-height: 0; background: #f0f0f0; }
.complist { width: 162px; flex: none; display: flex; flex-direction: column; padding-top: 6px; }
.searchrow { height: 24px; display: flex; align-items: center; flex: none; }
.searchbox { width: 136px; height: 24px; margin-left: 1px; background: #fff; border: 1px solid #8a8a8a; padding-left: 3px; color: #888; line-height: 22px; font-size: 12px; }
.searchbtn { margin-left: 6px; }
.comptree { flex: 1; margin-bottom: 1px; background: #fff; border: 2px solid #9a9a9a; border-top-width: 1px; padding-top: 3px; }
.croot { padding-left: 12px; }
.croot .chev { margin-left: -6px; }
.lead1 { width: 4px; border-top: 1px dotted #666; }
.croot .lbl { margin-left: 6px; }
.ckids { margin-left: 30px; border-left: 1px dotted #666; }
.ckids .row:last-child::before { content: ""; position: absolute; left: -1px; top: 9px; bottom: 0; width: 1px; background: #fff; }
.lead2 { width: 8px; border-top: 1px dotted #666; }
.citem { width: 51px; height: 16px; display: flex; align-items: center; padding-left: 3px; gap: 8px; }
.citem .a { margin-top: 2px; }
.citem.sel { background: #316ac5; }
.gear { width: 12px; height: 12px; }

/* property panel */
.props { flex: 1; margin-left: 6px; min-width: 0; display: flex; flex-direction: column; }
.tabs { height: 23px; padding-top: 3px; flex: none; display: flex; }
.tab { width: 61px; height: 20px; margin-left: 1px; background: #fff; border: 1px solid #d4d4d4; border-bottom: 0; text-align: center; line-height: 19px; }
.tabpage { height: 570px; margin-left: 2px; background: #fff; border: 1px solid #c8c8c8; padding-top: 4px; flex: none; }
.ptable { table-layout: fixed; width: 370px; border-collapse: collapse; margin-left: -1px; }
.c0 { width: 22px; } .c1 { width: 191px; } .c2 { width: 126px; } .c3 { width: 31px; }
.ptable th, .ptable td { border: 1px solid #bdbdbd; padding: 1px 0 0; height: 19px; font-weight: normal; line-height: 16px; overflow: hidden; white-space: nowrap; }
.ptable th { height: 22px; padding: 0 0 2px; text-align: center; background: linear-gradient(#fff, #ececec); }
.ptable th.hval { background: linear-gradient(#fbdfa4, #f2bd62); color: #5d1a8b; }
.ptable td.rn { text-align: center; background: linear-gradient(#fff, #ececec); font: 11px/16px "Liberation Mono", monospace; }
.ptable td.cur { background: #fbd38c; color: #8a1a10; }
.ptable td.nm { padding-left: 20px; }
.ptable td.sel { background: #0078d7; color: #fff; }
.ptable td.blue { color: #0000f0; }
.ptable td.val { padding-left: 2px; }
.ptable td.selv { background: #d5e8f7; }
.ptable td.ck { padding-left: 9px; padding-top: 0; }
.box { width: 13px; height: 13px; border: 1px solid #333; background: #fff; }
.nm9 { color: #888; }
.nm9 span { margin-left: 5px; }
.plusbox { display: inline-block; width: 12px; height: 12px; margin-left: 3px; border: 1px solid #aaa; color: #222; text-align: center; font: 11px/10px "Liberation Mono", monospace; vertical-align: -1px; }

/* status bar */
.status { height: 20px; flex: none; display: flex; background: #f0f0f0; gap: 2px; }
.seg { height: 20px; background: #f5f5f5; border: 1px solid #e2e2e2; line-height: 18px; padding-left: 1px; white-space: nowrap; flex: none; }
.s0 { width: 148px; } .s1 { width: 78px; } .s2 { width: 98px; } .s3 { width: 48px; } .s4 { width: 915px; } .s5 { flex: 1; }

/* taskbar */
.taskbar { height: 41px; flex: none; display: flex; align-items: stretch; background: #02090d; color: #fff; }
.start { width: 48px; background: #000; display: flex; align-items: center; justify-content: center; flex: none; }
.tsearch { width: 344px; background: #333; display: flex; align-items: center; padding-left: 9px; color: #8d8d8d; font-size: 13px; flex: none; }
.cortana { width: 21px; height: 21px; border: 3px solid #ddd; border-radius: 50%; margin-right: 6px; }
.tmic { width: 12px; height: 20px; margin-left: 124px; }
.tcell { width: 50px; display: flex; align-items: center; justify-content: center; flex: none; }
.w48 { width: 48px; } .w49 { width: 49px; }
.run { background: linear-gradient(#76b9ed, #76b9ed) center bottom / 40px 3px no-repeat; }
.active { background: linear-gradient(#76b9ed, #76b9ed) center bottom / 100% 3px no-repeat, #2c3a3f; }
.tv { width: 20px; height: 16px; }
.t22 { width: 22px; height: 22px; } .t24 { width: 24px; height: 24px; } .t26 { width: 26px; height: 26px; }
.tsep { width: 2px; height: 22px; background: #3c4448; margin: 9px 11px; }
.tray { flex: 1; display: flex; align-items: center; color: #ddd; }
.tsep2 { width: 2px; height: 22px; background: #3c4448; margin-left: 53px; }
.link { margin-left: 11px; }
.up { width: 12px; height: 7px; margin-left: 10px; }
.tr-bat { width: 18px; height: 14px; margin-left: 10px; }
.tr-16 { width: 16px; height: 16px; margin-left: 8px; }
.tr-16.narrow { margin-left: 4px; }
.tr-kbd { width: 24px; height: 17px; margin-left: 10px; }
.ime { margin-left: 9px; font-size: 13px; color: #fff; }
.tr-s { width: 16px; height: 18px; margin-left: 14px; }
.clock { width: 60px; margin-left: 17px; display: flex; flex-direction: column; align-items: center; line-height: 19px; color: #eee; }
.tr-act { width: 16px; height: 16px; margin-left: 18px; }

/* IME bar */
.imebar { position: absolute; left: 793px; top: 3px; width: 206px; height: 24px; background: #fff; border: 1px solid #b5cbe0; border-left: 0; display: flex; align-items: center; }
.sbig { width: 27px; height: 27px; margin-top: -6px; }
.ying { margin-left: 5px; color: #1c6fc4; font-size: 14px; font-weight: bold; }
.punc { margin-left: 8px; color: #1c6fc4; font: bold 13px/14px "Liberation Sans", sans-serif; }
.ib16 { width: 16px; height: 16px; }
.ib12 { width: 12px; height: 16px; }
.ib18 { width: 18px; height: 16px; }

/* parameter window */
.paramwin { position: absolute; left: 850px; top: 83px; width: 516px; height: 608px; background: linear-gradient(#9fb9da, #b9cfe8 20px); border-left: 1px solid #8e8e8e; border-bottom: 1px solid #222; box-shadow: inset 0 -1px 0 #39bcd6; }
.paramtitle { height: 20px; padding-left: 7px; line-height: 15px; font-size: 12px; color: #222; }
.canvas { width: 506px; height: 580px; margin-left: 7px; background: #000; outline: 1px solid #e8eef5; }
.cad text { font: 36px "Liberation Serif", serif; fill: #fff; }
.cad .red { fill: #f00; }
.cad .mid { font-size: 33px; }
.cad .big { font: 58px "Liberation Serif", "Noto Sans CJK SC", serif; }
.cad .xing { font-size: 52px; }

/* red marks */
.marks { position: absolute; left: 0; top: 0; width: 1366px; height: 768px; pointer-events: none; }
```
